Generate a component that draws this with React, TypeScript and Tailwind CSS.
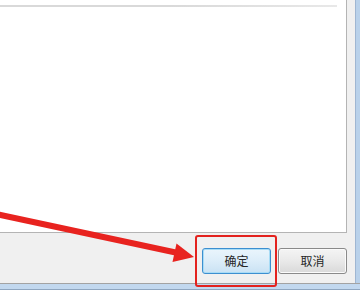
import React from 'react';

const font = { fontFamily: '"Noto Sans CJK SC", "Noto Sans", sans-serif' };

export default function App() {
    return (
        <div className="relative w-[360px] h-[290px] overflow-hidden bg-[#f0f0f0] flex flex-col" style={font}>
            <div className="flex flex-1 min-h-0">
                {/* dialog body */}
                <div className="flex-1 flex flex-col">
                    {/* list box */}
                    <div className="w-[347px] h-[233px] bg-white border-r border-b border-[#b4b4b4] pt-[5px]">
                        <div className="w-[337px] h-[2px] bg-gradient-to-r from-[#d9d9d9] via-[#d9d9d9] to-[#e8e8e8]" />
                    </div>
                    {/* buttons */}
                    <div className="flex justify-end gap-[7px] pr-[8px] pt-[15px]">
                        <button className="w-[69px] h-[26px] rounded-[3px] border border-[#3c8fd0] bg-gradient-to-b from-[#eaf5fc] via-[#dcedf9] to-[#c9e2f4] shadow-[inset_0_0_0_1px_#a8dcf6] text-[12px] text-[#262626]">
                            确定
                        </button>
                        <button className="w-[69px] h-[26px] rounded-[3px] border border-[#8a8a8a] bg-gradient-to-b from-[#f4f4f4] via-[#e9e9e9] to-[#d9d9d9] shadow-[inset_0_0_0_1px_#fbfbfb] text-[12px] text-[#262626]">
                            取消
                        </button>
                    </div>
                </div>
                {/* right window frame */}
                <div className="w-[5px] border-l border-[#9fb6d2] bg-[#b9d1ea]" />
            </div>
            {/* bottom window frame */}
            <div className="h-[7px] border-t border-[#a3a3a3] bg-[#c2d8ef] border-b border-b-[#8fa6c0]" />

            {/* annotation: red box */}
            <div className="absolute left-[195px] top-[235px] w-[82px] h-[52px] rounded-[3px] border-2 border-[#e3221e]" />
            {/* annotation: red arrow */}
            <svg className="absolute left-0 top-0" width="360" height="290" viewBox="0 0 360 290">
                <line x1="-4" y1="214" x2="178" y2="253" stroke="#e8231f" strokeWidth="6" />
                <polygon points="194,257 176.5,243.5 172.5,262" fill="#e8231f" />
            </svg>
        </div>
    );
}
